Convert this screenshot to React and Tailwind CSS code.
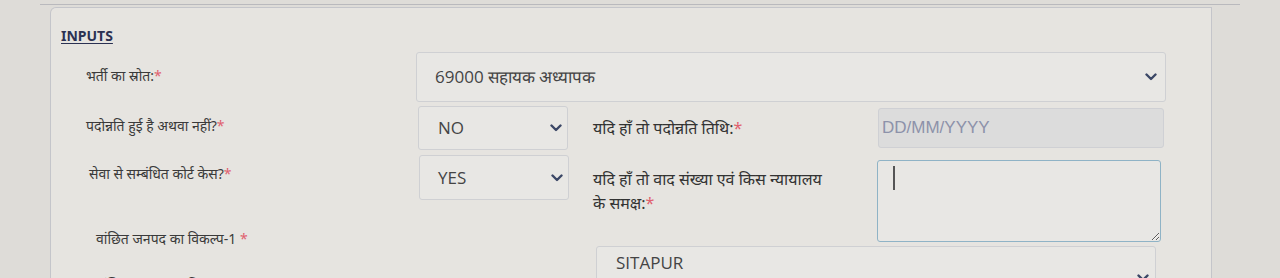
import { useState } from "react";

const font = { fontFamily: '"Noto Sans", "Open Sans", sans-serif' };

const Chevron = ({ className = "" }) => (
  <svg width="12" height="8" viewBox="0 0 12 8" className={"shrink-0 " + className}>
    <path d="M1.5 1.5 L6 6 L10.5 1.5" fill="none" stroke="#3b4766" strokeWidth="2.4" strokeLinecap="round" strokeLinejoin="round" />
  </svg>
);

const Star = () => <span className="text-[#e0606e]">*</span>;

const SelectBox = ({ value, className, textClass, chevronClass }) => (
  <div className={"flex justify-between border border-[#cfd0d3] rounded-[3px] bg-[#e8e7e4] " + className}>
    <span className={"text-[#444] " + textClass} style={{ fontFamily: '"Open Sans", sans-serif' }}>{value}</span>
    <Chevron className={chevronClass} />
  </div>
);

const App = () => {
  const [court] = useState("");

  return (
    <div className="h-[278px] w-[1280px] overflow-hidden bg-[#dedcd8]" style={font}>
      <div className="h-[5px] border-b border-[#b9b9bd] ml-[40px] mr-[40px]"></div>

      <div className="ml-[50px] w-[1162px] mt-[2px] h-[320px] border-l border-t border-r border-[#c4c5ca] rounded-tl-md bg-[#e6e4e0] pt-[18px]">
        <p className="ml-[10px] text-[14px] leading-[20px] font-bold text-[#2b3152] underline underline-offset-2">
          INPUTS
        </p>

        {/* row 1 */}
        <div className="flex items-center mt-[6px] ml-[35px] h-[50px]">
          <label className="w-[330px] text-[14px] text-[#3a3a3a] -mt-[4px]">
            भर्ती का स्रोत:<Star />
          </label>
          <SelectBox
            value="69000 सहायक अध्यापक"
            className="w-[750px] h-[50px] pl-[18px] pr-[8px] items-center"
            textClass="text-[17px]"
          />
        </div>

        {/* row 2 */}
        <div className="flex items-center mt-[4px] ml-[35px] h-[44px]">
          <label className="w-[332px] text-[14px] text-[#3a3a3a] -mt-[6px]">
            पदोन्नति हुई है अथवा नहीं?<Star />
          </label>
          <SelectBox value="NO" className="w-[150px] h-[44px] pl-[19px] pr-[5px] items-center" textClass="text-[17px]" />
          <label className="ml-[25px] w-[285px] text-[16px] text-[#333]">
            यदि हाँ तो पदोन्नति तिथि:<Star />
          </label>
          <input
            disabled
            placeholder="DD/MM/YYYY"
            className="w-[286px] h-[40px] border border-[#cfd0d4] rounded-[3px] bg-[#dcdcdc] px-[3px] text-[17px] placeholder:text-[#8d92aa]"
            style={{ fontFamily: '"Liberation Sans", sans-serif' }}
          />
        </div>

        {/* row 3 */}
        <div className="flex items-start mt-[5px] ml-[38px]">
          <label className="w-[330px] text-[14px] text-[#3a3a3a] mt-[8px]">
            सेवा से सम्बंधित कोर्ट केस?<Star />
          </label>
          <SelectBox value="YES" className="w-[150px] h-[45px] pl-[18px] pr-[5px] items-center" textClass="text-[17px]" />
          <p className="ml-[24px] w-[284px] text-[16px] leading-[24px] text-[#333] mt-[12px]">
            यदि हाँ तो वाद संख्या एवं किस न्यायालय
            <br />
            के समक्ष:<Star />
          </p>
          <div className="relative mt-[5px]">
            <textarea
              value={court}
              readOnly
              className="block w-[284px] h-[82px] border border-[#8fb3c6] rounded-[3px] bg-[#e8e7e4] resize-y outline-none"
            ></textarea>
            <span className="absolute left-[16px] top-[6px] w-[1.5px] h-[24px] bg-[#555]"></span>
          </div>
        </div>

        {/* row 4 */}
        <div className="-mt-[16px] ml-[45px]">
          <label className="text-[14px] text-[#3a3a3a]">
            वांछित जनपद का विकल्प-1 <Star />
          </label>
        </div>
        <div className="ml-[545px] -mt-[4px]">
          <SelectBox
            value="SITAPUR"
            className="w-[560px] h-[60px] pl-[19px] pr-[6px] items-start pt-[3px]"
            textClass="text-[17px]"
            chevronClass="mt-[24px]"
          />
        </div>

        {/* row 5 (cut off) */}
        <div className="-mt-[34px] ml-[45px]">
          <label className="text-[14px] text-[#3a3a3a]">
            वांछित जनपद का विकल्प-2 <Star />
          </label>
        </div>
      </div>
    </div>
  );
};

export default App;
